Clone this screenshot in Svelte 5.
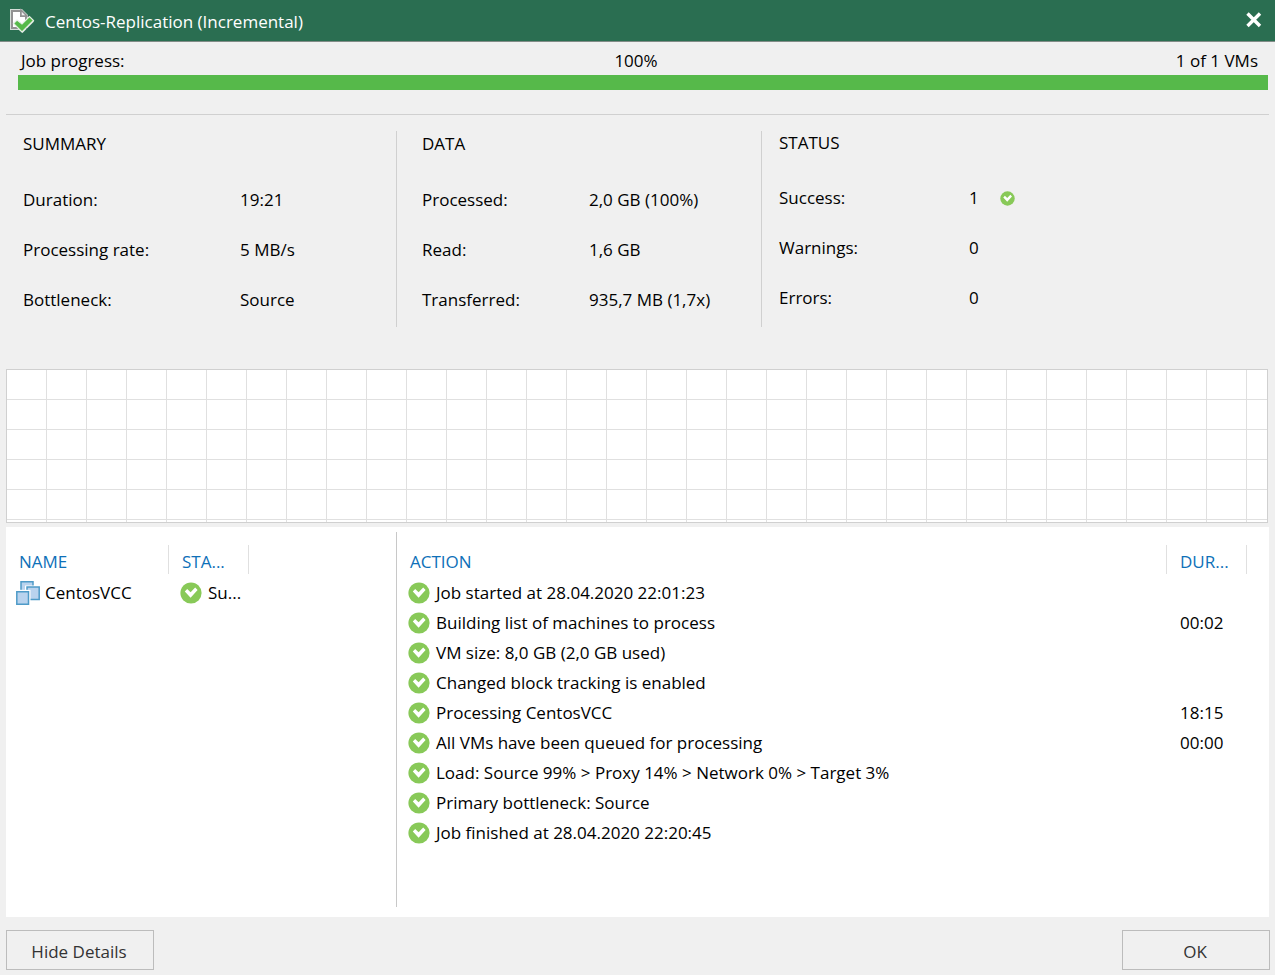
<script>
  const summary = [
    ['Duration:', '19:21'],
    ['Processing rate:', '5 MB/s'],
    ['Bottleneck:', 'Source']
  ];
  const data = [
    ['Processed:', '2,0 GB (100%)'],
    ['Read:', '1,6 GB'],
    ['Transferred:', '935,7 MB (1,7x)']
  ];
  const status = [
    ['Success:', '1'],
    ['Warnings:', '0'],
    ['Errors:', '0']
  ];
  const actions = [
    ['Job started at 28.04.2020 22:01:23', ''],
    ['Building list of machines to process', '00:02'],
    ['VM size: 8,0 GB (2,0 GB used)', ''],
    ['Changed block tracking is enabled', ''],
    ['Processing CentosVCC', '18:15'],
    ['All VMs have been queued for processing', '00:00'],
    ['Load: Source 99% > Proxy 14% > Network 0% > Target 3%', ''],
    ['Primary bottleneck: Source', ''],
    ['Job finished at 28.04.2020 22:20:45', '']
  ];
  const progress = 100;
</script>

{#snippet check(size)}
  <svg class="check" width={size} height={size} viewBox="0 0 22 22" aria-hidden="true">
    <circle cx="11" cy="11" r="10.6" fill="#88c958" />
    <path d="M4.8 9.4 7.2 7 10.6 10.2 15.2 5.6 17.6 8 10.6 15.8Z" fill="#fff" />
  </svg>
{/snippet}

<div class="window">
  <header>
    <svg width="26" height="26" viewBox="0 0 26 26" aria-hidden="true">
      <path d="M1 1H13L19 7V9L25 13.500 13.500 25 10 22H1Z" fill="#d4ddd8" />
      <path d="M3 3H12V8H17V20H3Z" fill="#fff" stroke="#929292" stroke-width="2" />
      <path d="M12 2V8H18Z" fill="#eee" stroke="#929292" stroke-width="1.500" />
      <path d="M4.500 15.500 8 12 13 16 20.500 8.500 24.500 12.500 13 24Z" fill="#55b949" stroke="#e5efe5" stroke-width="1.200" />
    </svg>
    <h1>Centos-Replication (Incremental)</h1>
    <button class="close" aria-label="Close">
      <svg width="16" height="16" viewBox="0 0 16 16" aria-hidden="true">
        <path d="M1.500 1.500 14 14M14 1.500 1.500 14" stroke="#fff" stroke-width="3.400" />
      </svg>
    </button>
  </header>

  <section class="progress">
    <div class="labels">
      <span id="job-progress">Job progress:</span>
      <span>{progress}%</span>
      <span>1 of 1 VMs</span>
    </div>
    <div class="track" role="progressbar" aria-labelledby="job-progress" aria-valuenow={progress}>
      <div class="fill" style="width: {progress}%"></div>
    </div>
  </section>

  <section class="stats">
    <div class="group summary">
      <h2>SUMMARY</h2>
      <dl>
        {#each summary as [label, value]}
          <dt>{label}</dt><dd>{value}</dd>
        {/each}
      </dl>
    </div>
    <div class="group data">
      <h2>DATA</h2>
      <dl>
        {#each data as [label, value]}
          <dt>{label}</dt><dd>{value}</dd>
        {/each}
      </dl>
    </div>
    <div class="group status">
      <h2>STATUS</h2>
      <dl>
        {#each status as [label, value], i}
          <dt>{label}</dt>
          <dd><span>{value}</span>{#if i === 0}{@render check(15)}{/if}</dd>
        {/each}
      </dl>
    </div>
  </section>

  <div class="graph"></div>

  <main>
    <div class="machines">
      <table>
        <colgroup><col class="name" /><col class="short" /><col /></colgroup>
        <thead>
          <tr><th><span>NAME</span></th><th><span>STA...</span></th><td></td></tr>
        </thead>
        <tbody>
          <tr>
            <td>
              <div class="cell">
                <svg width="24" height="24" viewBox="0 0 24 24" aria-hidden="true">
                  <path d="M5 .8H17V12H5Z" fill="#b9d3ee" stroke="#4f9bc8" stroke-width="1.500" />
                  <path d="M9 4.500H24V19H9Z" fill="#fff" />
                  <path d="M11 6H23.200V18.500H11Z" fill="#b9d3ee" stroke="#4f9bc8" stroke-width="1.500" />
                  <path d="M0 8.800H14.500V24H0Z" fill="#fff" />
                  <path d="M.8 10.800H12.500V23.200H.8Z" fill="#b9d3ee" stroke="#4f9bc8" stroke-width="1.500" />
                </svg>
                <span>CentosVCC</span>
              </div>
            </td>
            <td><div class="cell state">{@render check(22)}<span>Su...</span></div></td>
            <td></td>
          </tr>
        </tbody>
      </table>
    </div>
    <div class="actions">
      <table>
        <colgroup><col /><col class="short" /></colgroup>
        <thead>
          <tr><th><span>ACTION</span></th><th><span>DUR...</span></th></tr>
        </thead>
        <tbody>
          {#each actions as [action, duration]}
            <tr>
              <td><div class="cell">{@render check(22)}<span>{action}</span></div></td>
              <td class="time">{duration}</td>
            </tr>
          {/each}
        </tbody>
      </table>
    </div>
  </main>

  <footer>
    <button>Hide Details</button>
    <button>OK</button>
  </footer>
</div>

<style>
  :global(body) {
    margin: 0;
    background: #f0f0f0;
  }
  .window {
    display: flex;
    flex-direction: column;
    min-height: 100vh;
    box-sizing: border-box;
    background: #f0f0f0;
    color: #000;
    font: 17px/24px "Open Sans", "Noto Sans", sans-serif;
  }
  svg {
    display: block;
    flex: none;
  }
  h1, h2, dl, dd {
    margin: 0;
    font-size: 17px;
    font-weight: 400;
  }
  header {
    display: flex;
    align-items: center;
    gap: 10px;
    height: 41px;
    padding: 0 13px 0 9px;
    border-bottom: 1px solid #818c87;
    background: #2a6e51;
    color: #fff;
  }
  h1 {
    padding-top: 2px;
  }
  .close {
    margin-left: auto;
    padding: 0 0 2px;
    border: 0;
    background: none;
  }
  .progress {
    margin: 0 6px;
    padding: 7px 1px 24px 12px;
    border-bottom: 1px solid #d0d0d0;
  }
  .labels {
    display: grid;
    grid-template-columns: 1fr auto 1fr;
    margin: 0 10px 0 -4px;
  }
  .labels span:first-child {
    padding-left: 7px;
  }
  .labels span:last-child {
    text-align: right;
  }
  .track {
    height: 15px;
    margin-top: 2px;
    background: #ddd;
  }
  .fill {
    height: 100%;
    background: #56b94a;
  }
  .stats {
    display: grid;
    grid-template-columns: 391px 365px 1fr;
    padding: 16px 6px 42px;
  }
  .group {
    padding: 1px 0 15px 25px;
    border-right: 1px solid #d0d0d0;
  }
  .summary {
    padding-left: 17px;
  }
  .status {
    padding: 0 0 15px 17px;
    border: 0;
  }
  dl {
    display: grid;
    grid-template-columns: 167px 1fr;
    row-gap: 26px;
    margin-top: 32px;
  }
  .summary dl {
    grid-template-columns: 217px 1fr;
  }
  .status dl {
    grid-template-columns: 190px 1fr;
    margin-top: 31px;
  }
  dd {
    display: flex;
    align-items: center;
    gap: 21px;
  }
  .graph {
    height: 152px;
    margin: 0 7px 4px 6px;
    border: 1px solid #d0d0d0;
    background-color: #fff;
    background-image:
      linear-gradient(to right, transparent 39px, #e0e0e0 39px),
      linear-gradient(to bottom, transparent 29px, #e0e0e0 29px);
    background-size: 40px 30px;
  }
  main {
    display: flex;
    flex: 1;
    margin: 0 6px;
    padding: 5px 0 10px;
    background: #fff;
  }
  .machines {
    width: 390px;
    padding-top: 13px;
    border-right: 1px solid #c8c8c8;
  }
  .actions {
    flex: 1;
    padding: 13px 22px 0 0;
  }
  table {
    width: 100%;
    border-collapse: collapse;
    table-layout: fixed;
  }
  col.name {
    width: 163px;
  }
  col.short {
    width: 80px;
  }
  th, td {
    padding: 0;
    font-weight: 400;
    text-align: left;
    white-space: nowrap;
  }
  th {
    height: 33px;
    color: #0e70b8;
    vertical-align: top;
  }
  th span {
    display: block;
    padding: 5px 0 0 13px;
    border-right: 1px solid #e0e0e0;
  }
  td {
    height: 30px;
  }
  .cell {
    display: flex;
    align-items: center;
    gap: 6px;
    padding-left: 11px;
  }
  .machines .cell {
    gap: 5px;
    padding-left: 10px;
  }
  .machines .state {
    gap: 6px;
    padding-left: 11px;
  }
  .time {
    padding-left: 13px;
  }
  footer {
    display: flex;
    justify-content: space-between;
    padding: 13px 5px 5px 6px;
  }
  footer button {
    width: 148px;
    height: 40px;
    padding: 3px 2px 0 0;
    border: 1px solid #bcbcbc;
    background: #f0f0f0;
    color: #333;
    font: inherit;
  }
</style>
